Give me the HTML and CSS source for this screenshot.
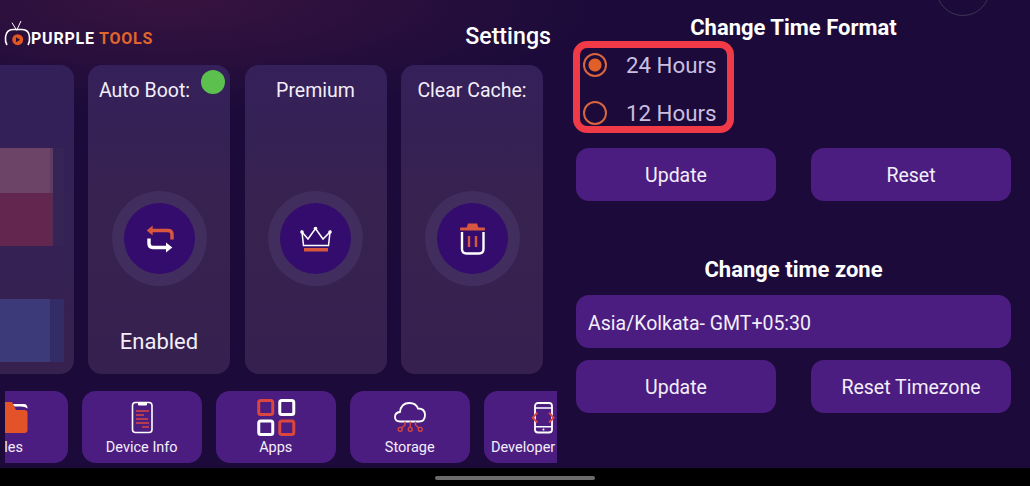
FILE: index.html
```html
<!DOCTYPE html>
<html lang="en">
<head>
  <meta charset="UTF-8">
  <title>Settings</title>
  <link rel="stylesheet" href="styles.css">
</head>
<body>
  <div class="screen">
    <!-- left side: tools -->
    <div class="leftPane">
      <div class="topBar">
        <div class="logo">
          <svg class="logoIcon" viewBox="0 0 28 28" width="28" height="28">
            <path d="M8 2.700 L12.700 10.300 L17 1" stroke="#fff" stroke-width="1" fill="none"/>
            <path d="M3 25 Q1 22 1.500 17 Q2.500 9.500 9 9.500 H18 Q25 9.500 25.500 17 Q26 22 24 25" stroke="#fff" stroke-width="1.600" fill="none"/>
            <circle cx="13.700" cy="19.700" r="5.500" fill="#e2561f"/>
            <path d="M12 17.200 L16.200 19.700 L12 22.200 Z" fill="#2c1037"/>
          </svg>
          <span class="logoWhite">PURPLE</span> <span class="logoOrange">TOOLS</span>
        </div>
        <div class="pageTitle">Settings</div>
      </div>

      <div class="cards">
        <div class="card cardPreview">
          <div class="blockPink"></div>
          <div class="blockRed"></div>
          <div class="blockBlue"></div>
        </div>

        <div class="card">
          <span class="greenDot"></span>
          <div class="cardLabel cardLabelLeft">Auto Boot:</div>
          <div class="ring">
            <div class="ringInner">
              <svg viewBox="0 0 71 71" width="71" height="71">
                <path d="M27 27.500 H44 Q48 27.500 48 31.500 V36.500" stroke="#d9573f" stroke-width="3.400" fill="none"/>
                <path d="M28.700 22.500 L22.700 27.500 L28.700 32.500 Z" fill="#d9573f"/>
                <path d="M25 35.500 V40.500 Q25 44.500 29 44.500 H44" stroke="#fff" stroke-width="3.400" fill="none"/>
                <path d="M42 39.500 L48.300 44.500 L42 49.500 Z" fill="#fff"/>
              </svg>
            </div>
          </div>
          <div class="cardStatus">Enabled</div>
        </div>

        <div class="card">
          <div class="cardLabel">Premium</div>
          <div class="ring">
            <div class="ringInner">
              <svg viewBox="0 0 71 71" width="71" height="71">
                <path d="M22 29 L28 36 L35.500 25.500 L43 36 L50 29 L48.500 42.500 H23.500 Z" stroke="#fff" stroke-width="1.500" fill="none"/>
                <circle cx="22" cy="29" r="1.800" fill="#fff"/>
                <circle cx="35.500" cy="25.500" r="1.800" fill="#fff"/>
                <circle cx="50" cy="29" r="1.800" fill="#fff"/>
                <rect x="24" y="45" width="24" height="3.500" fill="#d9573f"/>
              </svg>
            </div>
          </div>
        </div>

        <div class="card">
          <div class="cardLabel">Clear Cache:</div>
          <div class="ring">
            <div class="ringInner">
              <svg viewBox="0 0 71 71" width="71" height="71">
                <path d="M29.500 25 L31 20.500 H40 L41.500 25 Z" fill="#d9573f"/>
                <rect x="23" y="24.500" width="25" height="3" rx="1" fill="#d9573f"/>
                <path d="M25 29 V46 Q25 50.500 29.500 50.500 H42 Q46.500 50.500 46.500 46 V29" stroke="#fff" stroke-width="2.400" fill="none"/>
                <path d="M32 33 V44 M39 33 V44" stroke="#d9573f" stroke-width="2.400"/>
              </svg>
            </div>
          </div>
        </div>
      </div>

      <div class="tileStrip">
        <div class="tile tileFirst">
          <svg class="tileIcon" viewBox="0 0 50 34" width="50" height="34">
            <path d="M3 1 H29 L33 9 H41 Q44.500 9 44.500 12 V29 Q44.500 32 41.500 32 H6 Q3 32 3 29 Z" fill="#e2532a"/>
            <path d="M30 3 H41 Q44.500 3 44.500 7.500 Q42 5.500 38 5.500 H31.500 Z" fill="#fff"/>
          </svg>
          <span>Files</span>
        </div>
        <div class="tile">
          <svg class="tileIcon" viewBox="0 0 50 34" width="50" height="34">
            <rect x="15.500" y="1.500" width="19.500" height="30" rx="3" stroke="#fff" stroke-width="1.600" fill="none"/>
            <path d="M21 2 H30 V3.500 Q30 4.500 29 4.500 H22 Q21 4.500 21 3.500 Z" fill="#fff"/>
            <path d="M19 10 H32 M19 14 H27 M19 18 H31 M19 22 H32 M25 26 H32" stroke="#d9473f" stroke-width="1.500"/>
          </svg>
          <span>Device Info</span>
        </div>
        <div class="tile">
          <svg class="tileIcon tileIconApps" viewBox="0 0 50 38" width="50" height="38">
            <rect x="7.750" y="2.500" width="14" height="14" rx="2" stroke="#d9473f" stroke-width="3" fill="none"/>
            <rect x="28.750" y="2.500" width="14" height="14" rx="2" stroke="#fff" stroke-width="3" fill="none"/>
            <rect x="7.750" y="23" width="14" height="13.500" rx="2" stroke="#fff" stroke-width="3" fill="none"/>
            <rect x="28.750" y="23" width="14" height="13.500" rx="2" stroke="#d9473f" stroke-width="3" fill="none"/>
          </svg>
          <span>Apps</span>
        </div>
        <div class="tile">
          <svg class="tileIcon" viewBox="0 0 50 34" width="50" height="34">
            <path d="M15 20.500 Q10 20.500 10 16 Q10 11.500 15 11 Q16 2 24.500 2 Q31 2 33 7.500 Q40 7.500 40 14 Q40 20.500 34 20.500 Z" stroke="#fff" stroke-width="1.800" fill="none"/>
            <path d="M25.250 20.500 V26.500 M20 20.500 V24 L16.500 27 M30.500 20.500 V24 L34 27" stroke="#d9473f" stroke-width="1.400" fill="none"/>
            <circle cx="25.250" cy="28.300" r="2" stroke="#d9473f" stroke-width="1.300" fill="none"/>
            <circle cx="15.250" cy="28.300" r="2" stroke="#d9473f" stroke-width="1.300" fill="none"/>
            <circle cx="35.250" cy="28.300" r="2" stroke="#d9473f" stroke-width="1.300" fill="none"/>
          </svg>
          <span>Storage</span>
        </div>
        <div class="tile tileDev">
          <svg class="tileIcon" viewBox="0 0 50 34" width="50" height="34">
            <rect x="16" y="2" width="17" height="29.500" rx="3" stroke="#fff" stroke-width="1.800" fill="none"/>
            <path d="M16 7 H33 M16 25.700 H33" stroke="#fff" stroke-width="1.600"/>
            <circle cx="24.500" cy="28.500" r="1" fill="#fff"/>
            <path d="M18.300 11.700 L13.800 16.700 L18.300 21.700 M30 11.700 L34.500 16.700 L30 21.700" stroke="#d9473f" stroke-width="2" fill="none"/>
          </svg>
          <span class="tileDevLabel">Developer</span>
        </div>
      </div>
    </div>

    <!-- right side: time settings -->
    <div class="rightPane">
      <span class="cornerCircle"></span>
      <h2 class="paneTitle">Change Time Format</h2>
      <div class="radioBox">
        <div class="radioRow">
          <span class="radio radioOn"></span>
          <span>24 Hours</span>
        </div>
        <div class="radioRow">
          <span class="radio"></span>
          <span>12 Hours</span>
        </div>
      </div>
      <div class="btnRow">
        <button class="btn">Update</button>
        <button class="btn">Reset</button>
      </div>

      <h2 class="paneTitle paneTitleZone">Change time zone</h2>
      <div class="zoneField">Asia/Kolkata- GMT+05:30</div>
      <div class="btnRow btnRowZone">
        <button class="btn">Update</button>
        <button class="btn">Reset Timezone</button>
      </div>
    </div>
  </div>

  <div class="navBar"><span class="homeBar"></span></div>
</body>
</html>
```

FILE: styles.css
```css
* {
  box-sizing: border-box;
}

body {
  margin: 0;
  width: 1030px;
  height: 486px;
  overflow: hidden;
  background: #000;
  font-family: "Roboto", "Liberation Sans", sans-serif;
  color: #f3eefa;
}

.screen {
  display: flex;
  height: 468px;
  background:
    radial-gradient(ellipse 420px 110px at 170px 0, #38133f 0%, rgba(56, 19, 63, 0) 100%),
    #1c0b3a;
  overflow: hidden;
}

/* Left side */
.leftPane {
  width: 557px;
  flex-shrink: 0;
}

.topBar {
  display: flex;
  align-items: center;
  justify-content: space-between;
  height: 65px;
  padding: 5px 6px 0 4px;
}

.logo {
  display: flex;
  align-items: center;
  gap: 4px;
  margin-top: 6px;
  font-size: 16px;
  font-weight: 700;
  letter-spacing: 0.800px;
}

.logoIcon {
  margin-top: -8px;
}

.logoWhite {
  color: #fff;
  margin-left: -5px;
}

.logoOrange {
  color: #e0662c;
}

.pageTitle {
  font-size: 23.200px;
  font-weight: 500;
  color: #fff;
  margin-top: 1px;
}

.cards {
  display: flex;
  gap: 14.500px;
  height: 309px;
  margin-left: -68.500px;
}

.card {
  position: relative;
  display: flex;
  flex-direction: column;
  align-items: center;
  width: 142px;
  flex-shrink: 0;
  padding-top: 14px;
  border-radius: 14px;
  background: linear-gradient(180deg, #35205a 0%, #372250 45%, #36204f 100%);
}

.cardPreview {
  align-items: flex-end;
  padding: 83px 24px 0 0;
  background: linear-gradient(180deg, #33205a 0%, #36214f 100%);
}

.blockPink,
.blockRed,
.blockBlue {
  width: 118px;
}

.blockPink {
  height: 45px;
  background: #6b4468;
  box-shadow: 3px 0 0 #5f3c60, 14px 0 0 #372457;
}

.blockRed {
  height: 53px;
  background: #63274f;
  box-shadow: 3px 0 0 #5b2a50, 14px 0 0 #372457;
}

.blockBlue {
  height: 63px;
  margin-top: 53px;
  background: #3d3a7a;
  box-shadow: 14px 0 0 #332c66;
}

.greenDot {
  position: absolute;
  top: 5px;
  right: 5px;
  width: 24px;
  height: 24px;
  border-radius: 50%;
  background: #5cc04f;
}

.cardLabel {
  height: 24px;
  line-height: 24px;
  font-size: 19.500px;
}

.cardLabelLeft {
  align-self: flex-start;
  margin-left: 11px;
}

.ring {
  display: flex;
  align-items: center;
  justify-content: center;
  width: 95px;
  height: 95px;
  margin-top: 88px;
  border-radius: 50%;
  background: #412d5e;
}

.ringInner {
  width: 71px;
  height: 71px;
  border-radius: 50%;
  background: #330c6e;
}

.ringInner svg {
  display: block;
}

.cardStatus {
  margin-top: 43px;
  font-size: 22px;
  line-height: 26px;
}

.tileStrip {
  display: flex;
  gap: 14.500px;
  height: 72px;
  margin: 17px 0 0 5px;
  overflow: hidden;
}

.tile {
  display: flex;
  flex-direction: column;
  align-items: center;
  justify-content: flex-end;
  width: 119.500px;
  flex-shrink: 0;
  padding-bottom: 7px;
  border-radius: 14px;
  background: #4b1d80;
  font-size: 14.500px;
  line-height: 16px;
}

.tileFirst {
  margin-left: -57px;
}

.tileIcon {
  display: block;
  margin-bottom: 5px;
}

.tileIconApps {
  margin-bottom: 4px;
}

.tileDevLabel {
  align-self: flex-start;
  margin-left: 7px;
}

/* Right side */
.rightPane {
  position: relative;
  flex: 1;
  padding: 16px 19px 0 19px;
}

.cornerCircle {
  position: absolute;
  top: -38px;
  left: 379px;
  width: 54px;
  height: 54px;
  border: 1px solid #3f3353;
  border-radius: 50%;
}

.paneTitle {
  margin: 0;
  font-size: 22px;
  line-height: 24px;
  font-weight: 700;
  text-align: center;
  color: #fff;
}

.paneTitleZone {
  margin-top: 57px;
}

.radioBox {
  width: 161px;
  height: 92px;
  margin: 1px 0 0 -3px;
  padding: 0 0 0 3px;
  border: 7px solid #f03a47;
  border-radius: 14px;
  font-size: 22.300px;
  color: #c9bfe0;
}

.radioRow {
  display: flex;
  align-items: center;
  gap: 19px;
  height: 48px;
  margin-top: -7px;
}

.radioRow + .radioRow {
  margin-top: 0;
}

.radio {
  width: 24px;
  height: 24px;
  border: 2px solid #d9653f;
  border-radius: 50%;
}

.radioOn {
  background: radial-gradient(circle, #e0602a 0, #e0602a 6px, transparent 7px);
}

.btnRow {
  display: flex;
  justify-content: space-between;
  margin-top: 15px;
}

.btnRowZone {
  margin-top: 12px;
}

.btn {
  width: 200px;
  height: 53px;
  padding: 2px 0 0;
  border: none;
  border-radius: 13px;
  background: #4b1d80;
  color: #f3eefa;
  font-family: inherit;
  font-size: 19.500px;
}

.zoneField {
  display: flex;
  align-items: center;
  height: 53px;
  margin-top: 13px;
  padding: 3px 0 0 12px;
  border-radius: 13px;
  background: #4b1d80;
  font-size: 19.500px;
}

/* Bottom navigation */
.navBar {
  display: flex;
  justify-content: center;
  padding-top: 8px;
}

.homeBar {
  width: 160px;
  height: 4px;
  border-radius: 2px;
  background: #6b6b6b;
}
```
